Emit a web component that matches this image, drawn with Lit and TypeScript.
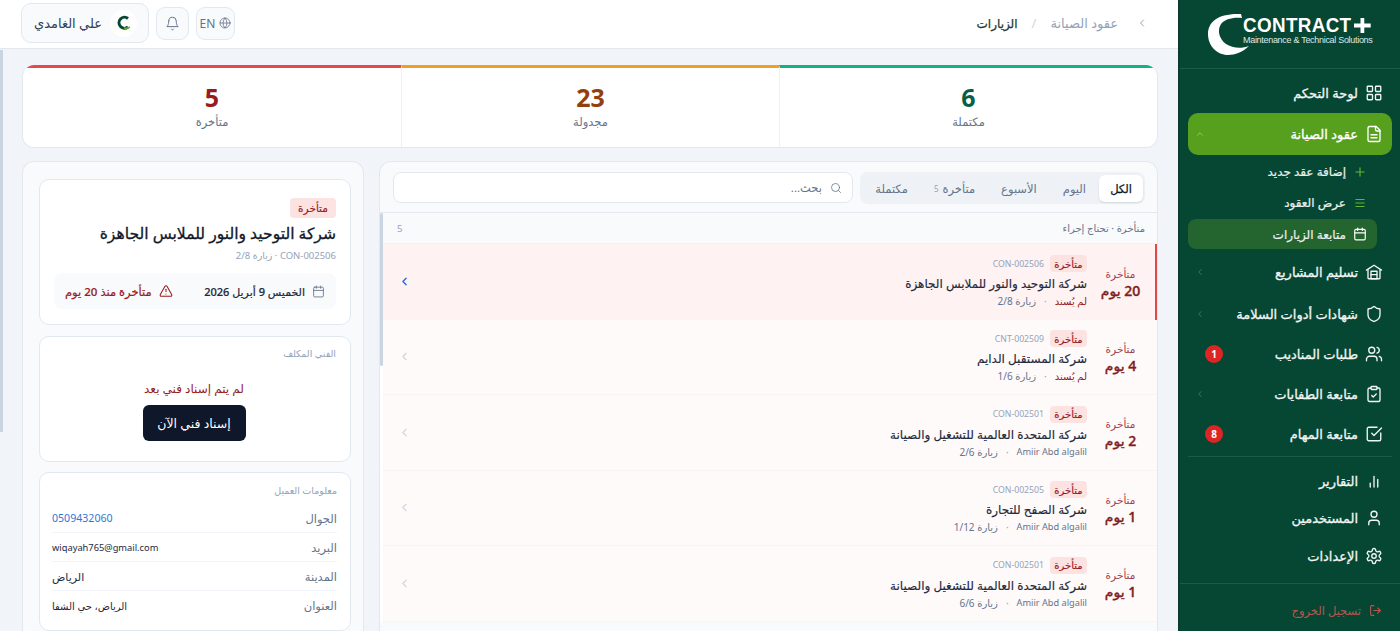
import {LitElement, css, html, svg} from 'lit';
import {customElement} from 'lit/decorators.js';

const ICONS: Record<string, unknown> = {
  grid: svg`<rect x="3" y="3" width="7" height="7" rx="1"/><rect x="14" y="3" width="7" height="7" rx="1"/><rect x="14" y="14" width="7" height="7" rx="1"/><rect x="3" y="14" width="7" height="7" rx="1"/>`,
  file: svg`<path d="M15 2H6a2 2 0 0 0-2 2v16a2 2 0 0 0 2 2h12a2 2 0 0 0 2-2V7Z"/><path d="M14 2v4a2 2 0 0 0 2 2h4"/><path d="M16 13H8"/><path d="M16 17H8"/>`,
  plus: svg`<path d="M5 12h14"/><path d="M12 5v14"/>`,
  lines: svg`<path d="M5 6h14"/><path d="M5 12h14"/><path d="M5 18h14"/>`,
  calendar: svg`<path d="M8 2v4"/><path d="M16 2v4"/><rect x="3" y="4" width="18" height="18" rx="2"/><path d="M3 10h18"/>`,
  warehouse: svg`<path d="M2 9.500 12 3l10 6.500"/><path d="M4 9v11a1 1 0 0 0 1 1h14a1 1 0 0 0 1-1V9"/><rect x="8" y="11" width="8" height="10"/><path d="M8 15.500h8"/>`,
  shield: svg`<path d="M20 13c0 5-3.5 7.5-7.66 8.95a1 1 0 0 1-.67-.01C7.5 20.5 4 18 4 13V6a1 1 0 0 1 1-1c2 0 4.5-1.2 6.24-2.72a1.17 1.17 0 0 1 1.52 0C14.51 3.81 17 5 19 5a1 1 0 0 1 1 1z"/>`,
  users: svg`<path d="M16 21v-2a4 4 0 0 0-4-4H6a4 4 0 0 0-4 4v2"/><circle cx="9" cy="7" r="4"/><path d="M22 21v-2a4 4 0 0 0-3-3.87"/><path d="M16 3.13a4 4 0 0 1 0 7.75"/>`,
  clipboard: svg`<rect x="8" y="2" width="8" height="4" rx="1"/><path d="M16 4h2a2 2 0 0 1 2 2v14a2 2 0 0 1-2 2H6a2 2 0 0 1-2-2V6a2 2 0 0 1 2-2h2"/><path d="m9 14 2 2 4-4"/>`,
  check: svg`<path d="M21 10.5V19a2 2 0 0 1-2 2H5a2 2 0 0 1-2-2V5a2 2 0 0 1 2-2h11"/><path d="m9 11 3 3L22 4"/>`,
  chart: svg`<path d="M7 20v-5"/><path d="M12 20V6"/><path d="M17 20V10"/>`,
  user: svg`<path d="M19 21v-2a4 4 0 0 0-4-4H9a4 4 0 0 0-4 4v2"/><circle cx="12" cy="7" r="4"/>`,
  gear: svg`<path d="M12.22 2h-.44a2 2 0 0 0-2 2v.18a2 2 0 0 1-1 1.73l-.43.25a2 2 0 0 1-2 0l-.15-.08a2 2 0 0 0-2.73.73l-.22.38a2 2 0 0 0 .73 2.73l.15.1a2 2 0 0 1 1 1.72v.51a2 2 0 0 1-1 1.74l-.15.09a2 2 0 0 0-.73 2.73l.22.38a2 2 0 0 0 2.73.73l.15-.08a2 2 0 0 1 2 0l.43.25a2 2 0 0 1 1 1.73V20a2 2 0 0 0 2 2h.44a2 2 0 0 0 2-2v-.18a2 2 0 0 1 1-1.73l.43-.25a2 2 0 0 1 2 0l.15.08a2 2 0 0 0 2.73-.73l.22-.39a2 2 0 0 0-.73-2.73l-.15-.08a2 2 0 0 1-1-1.74v-.5a2 2 0 0 1 1-1.74l.15-.09a2 2 0 0 0 .73-2.73l-.22-.38a2 2 0 0 0-2.73-.73l-.15.08a2 2 0 0 1-2 0l-.43-.25a2 2 0 0 1-1-1.73V4a2 2 0 0 0-2-2z"/><circle cx="12" cy="12" r="3"/>`,
  logout: svg`<path d="M9 21H5a2 2 0 0 1-2-2V5a2 2 0 0 1 2-2h4"/><path d="m16 17 5-5-5-5"/><path d="M21 12H9"/>`,
  bell: svg`<path d="M6 8a6 6 0 0 1 12 0c0 7 3 9 3 9H3s3-2 3-9"/><path d="M10.3 21a1.94 1.94 0 0 0 3.4 0"/>`,
  globe: svg`<circle cx="12" cy="12" r="10"/><path d="M12 2a14.5 14.5 0 0 0 0 20 14.5 14.5 0 0 0 0-20"/><path d="M2 12h20"/>`,
  search: svg`<circle cx="11" cy="11" r="8"/><path d="m21 21-4.3-4.3"/>`,
  alert: svg`<path d="m21.73 18-8-14a2 2 0 0 0-3.48 0l-8 14A2 2 0 0 0 4 21h16a2 2 0 0 0 1.73-3"/><path d="M12 9v4"/><path d="M12 17h.01"/>`,
  left: svg`<path d="m15 18-6-6 6-6"/>`,
  up: svg`<path d="m18 15-6-6-6 6"/>`,
};

const icon = (name: string, size: number, sw = 2) => html`<svg
  class="ic" width=${size} height=${size} viewBox="0 0 24 24" fill="none"
  stroke="currentColor" stroke-width=${sw} stroke-linecap="round" stroke-linejoin="round">${ICONS[name]}</svg>`;

const NAV_TOP = [
  {label: 'تسليم المشاريع', ic: 'warehouse', chev: true, h: 42},
  {label: 'شهادات أدوات السلامة', ic: 'shield', chev: true, h: 41},
  {label: 'طلبات المناديب', ic: 'users', badge: '1', h: 40},
  {label: 'متابعة الطفايات', ic: 'clipboard', chev: true, h: 40},
  {label: 'متابعة المهام', ic: 'check', badge: '8', h: 40},
];

const NAV_BOTTOM = [
  {label: 'التقارير', ic: 'chart'},
  {label: 'المستخدمين', ic: 'user'},
  {label: 'الإعدادات', ic: 'gear'},
];

const ROWS = [
  {days: '20 يوم', code: 'CON-002506', name: 'شركة التوحيد والنور للملابس الجاهزة', who: 'لم يُسند', visit: 'زيارة 2/8', open: true},
  {days: '4 يوم', code: 'CNT-002509', name: 'شركة المستقبل الدايم', who: 'لم يُسند', visit: 'زيارة 1/6'},
  {days: '2 يوم', code: 'CON-002501', name: 'شركة المتحدة العالمية للتشغيل والصيانة', who: 'Amiir Abd algalil', visit: 'زيارة 2/6'},
  {days: '1 يوم', code: 'CON-002505', name: 'شركة الصفح للتجارة', who: 'Amiir Abd algalil', visit: 'زيارة 1/12'},
  {days: '1 يوم', code: 'CON-002501', name: 'شركة المتحدة العالمية للتشغيل والصيانة', who: 'Amiir Abd algalil', visit: 'زيارة 6/6'},
];

const INFO = [
  {k: 'الجوال', v: '0509432060', cls: 'phone'},
  {k: 'البريد', v: 'wiqayah765@gmail.com', cls: 'mail'},
  {k: 'المدينة', v: 'الرياض', cls: ''},
  {k: 'العنوان', v: 'الرياض، حي الشفا', cls: 'small'},
];

@customElement('app-root')
export class AppRoot extends LitElement {
  static override styles = css`
    :host {
      display: flex;
      width: 1400px;
      height: 631px;
      overflow: hidden;
      position: relative;
      background: #f1f5f9;
      color: #0f172a;
      font-family: "Noto Sans", "DejaVu Sans", sans-serif;
      direction: rtl;
    }
    * { box-sizing: border-box; }
    .ic { flex: none; display: block; }

    /* sidebar */
    .side {
      width: 222px;
      flex: none;
      height: 631px;
      background: #064734;
      border-left: 2px solid #0d3b2e;
      color: #fff;
      display: flex;
      flex-direction: column;
    }
    .logo {
      height: 69px;
      flex: none;
      border-bottom: 1px solid rgba(255,255,255,.1);
      padding: 13px 0 0 28px;
      direction: ltr;
      display: flex;
      justify-content: flex-start;
      position: relative;
    }
    .logo-text { position: absolute; left: 63px; top: 14px; font-family: "Liberation Sans", sans-serif; }
    .logo-main {
      display: flex;
      align-items: center;
      gap: 3px;
      font-size: 20px;
      font-weight: 700;
      line-height: 22px;
      height: 22px;
      letter-spacing: .4px;
      white-space: nowrap;
      transform: scaleX(.94);
      transform-origin: left center;
    }
    .logo-sub { font-size: 9px; line-height: 9px; letter-spacing: -.3px; color: #dfe9e5; white-space: nowrap; }
    .nav { padding: 3px 8px 0 8px; }
    .item {
      display: flex;
      align-items: center;
      gap: 7px;
      height: 41px;
      padding: 0 9px 0 0;
      font-size: 13px;
      font-weight: 500;
      -webkit-text-stroke: .3px currentColor;
      color: #f1f5f3;
      position: relative;
    }
    .item.active {
      height: 42px;
      background: #56a01e;
      border-radius: 10px;
      color: #fff;
    }
    .item .chev { position: absolute; left: 7px; top: 50%; transform: translateY(-50%); color: rgba(255,255,255,.28); }
    .item.active .chev { color: rgba(255,255,255,.45); }
    .badge {
      position: absolute;
      left: 17px;
      top: 50%;
      transform: translateY(-50%);
      width: 18px;
      height: 18px;
      border-radius: 50%;
      background: #dc2626;
      color: #fff;
      font-size: 10px;
      font-weight: 700;
      -webkit-text-stroke: 0;
      display: flex;
      align-items: center;
      justify-content: center;
    }
    .subs { padding: 1px 15px 2px 0; }
    .sub {
      display: flex;
      align-items: center;
      gap: 7px;
      height: 31px;
      padding-right: 10px;
      font-size: 12px;
      font-weight: 500;
      -webkit-text-stroke: .2px currentColor;
      color: #eaf1ee;
    }
    .sub .ic { color: #65b32e; }
    .sub.on { height: 30px; background: #24642f; border-radius: 8px; margin-top: 1px; }
    .sub.on .ic { color: #fff; }
    .rule { height: 1px; background: rgba(255,255,255,.1); margin: 2px 0 5px; }
    .item.low { height: 37.5px; }
    .foot {
      margin-top: 8px;
      border-top: 1px solid rgba(255,255,255,.1);
      padding: 7px 18px 0 0;
      height: 48px;
      display: flex;
      align-items: center;
      gap: 8px;
      font-size: 11.5px;
      font-weight: 500;
      color: #b5574d;
    }

    /* main column */
    .main { flex: 1; min-width: 0; display: flex; flex-direction: column; height: 631px; }
    .top {
      height: 49px;
      flex: none;
      background: #fff;
      border-bottom: 1px solid #e2e8f0;
      display: flex;
      align-items: center;
      justify-content: space-between;
      padding: 0 30px 2px 21px;
    }
    .crumbs { display: flex; align-items: center; font-size: 13px; color: #94a3b8; }
    .crumbs .ic { margin-left: 18px; }
    .crumbs .sep { margin: 0 14px; color: #cbd5e1; }
    .crumbs .now { font-size: 12px; color: #1e3a34; font-weight: 500; -webkit-text-stroke: .25px currentColor; }
    .tools { display: flex; align-items: center; gap: 7px; }
    .tool {
      height: 33px;
      border: 1px solid #e2e8f0;
      border-radius: 9px;
      background: #f8fafc;
      color: #64748b;
      display: flex;
      align-items: center;
      justify-content: center;
      gap: 4px;
      font-size: 12px;
    }
    .tool.bell { width: 33px; }
    .tool.lang { width: 39px; }
    .who {
      width: 128px;
      height: 40px;
      border: 1px solid #e2e8f0;
      border-radius: 10px;
      background: #f8fafc;
      display: flex;
      align-items: center;
      gap: 8px;
      padding-right: 11px;
      font-size: 13px;
      color: #334155;
    }
    .avatar {
      width: 27px;
      height: 27px;
      border-radius: 50%;
      background: #fff;
      flex: none;
      display: flex;
      align-items: center;
      justify-content: center;
    }

    .body { flex: 1; min-height: 0; padding: 16px 20px 0 22px; display: flex; flex-direction: column; gap: 13px; overflow: hidden; }
    .stats {
      flex: none;
      height: 83px;
      display: grid;
      grid-template-columns: repeat(3, 1fr);
      background: #fff;
      border: 1px solid #e2e8f0;
      border-top: 0;
      border-radius: 12px;
      overflow: hidden;
    }
    .stat {
      border-top: 3px solid;
      text-align: center;
      padding-top: 15px;
      border-left: 1px solid #eef2f6;
    }
    .stat:last-child { border-left: 0; }
    .stat b { display: block; font-size: 25px; line-height: 28px; font-weight: 700; }
    .stat span { display: block; font-size: 11.5px; line-height: 17px; margin-top: 2px; color: #64748b; }

    .cols { flex: 1; min-height: 0; display: flex; gap: 15px; }
    .list {
      flex: 1;
      min-width: 0;
      background: #f8fafc;
      border: 1px solid #e2e8f0;
      border-bottom: 0;
      border-radius: 12px 12px 0 0;
      overflow: hidden;
    }
    .bar {
      height: 51px;
      display: flex;
      align-items: flex-start;
      gap: 7px;
      padding: 10px 12px 0 13px;
      border-bottom: 1px solid #e2e8f0;
    }
    .tabs {
      width: 285px;
      height: 32px;
      flex: none;
      background: #eef2f6;
      border-radius: 8px;
      display: flex;
      align-items: center;
      padding: 0 2px;
      font-size: 11.5px;
      color: #64748b;
    }
    .tab { height: 27px; display: flex; align-items: center; justify-content: center; gap: 4px; padding: 0 13px; white-space: nowrap; }
    .tab.on { width: 44px; padding: 0; background: #fff; border-radius: 6px; color: #0f172a; font-weight: 500; -webkit-text-stroke: .25px currentColor; box-shadow: 0 1px 2px rgba(15,23,42,.12); }
    .tab small { font-size: 8px; color: #94a3b8; }
    .search {
      flex: 1;
      height: 31px;
      background: #fff;
      border: 1px solid #e2e8f0;
      border-radius: 8px;
      display: flex;
      align-items: center;
      gap: 8px;
      padding-right: 10px;
      font-size: 11.5px;
      color: #64748b;
    }
    .search .ic { color: #64748b; }
    .group {
      height: 31px;
      display: flex;
      align-items: center;
      justify-content: space-between;
      padding: 0 12px 0 17px;
      border-bottom: 1px solid #eef2f6;
      font-size: 10px;
      color: #64748b;
    }
    .group span:last-child { color: #94a3b8; font-size: 9.5px; }
    .rows { padding-left: 3px; background: #fff; }
    .row {
      height: 75.5px;
      display: flex;
      align-items: center;
      background: #fffafa;
      border-bottom: 1px solid #fbf3f3;
      padding: 0 0 0 15px;
      color: #cbd5e1;
    }
    .row.open { background: #fef2f2; border-right: 2px solid #dc4a4a; color: #2563eb; border-bottom: 0; }
    .row.open .late { width: 68px; padding-right: 1px; }
    .late { width: 70px; flex: none; padding-right: 3px; padding-top: 2px; text-align: center; }
    .late i { display: block; font-style: normal; font-size: 10.5px; line-height: 16px; color: #a1414a; }
    .late b { display: block; font-size: 14px; line-height: 18px; font-weight: 500; -webkit-text-stroke: .4px currentColor; color: #7f1d1d; }
    .mid { flex: 1; min-width: 0; }
    .l1 { display: flex; align-items: center; gap: 6px; height: 17px; }
    .pill {
      background: #fde2e2;
      color: #991b1b;
      border-radius: 4px;
      font-size: 10px;
      font-weight: 500;
      -webkit-text-stroke: .15px currentColor;
      width: 37px;
      height: 17px;
      display: flex;
      align-items: center;
      justify-content: center;
    }
    .code { font-size: 8.7px; color: #94a3b8; }
    .name { font-size: 12px; font-weight: 500; -webkit-text-stroke: .15px currentColor; line-height: 20px; margin-top: 2px; color: #1e293b; }
    .meta { display: flex; align-items: center; gap: 8px; font-size: 10px; line-height: 14px; color: #64748b; }
    .meta .red { color: #991b1b; }
    .meta .dot { color: #94a3b8; }
    .meta .tech { font-size: 9.2px; }

    .detail {
      width: 342px;
      flex: none;
      background: #f8fafc;
      border: 1px solid #e2e8f0;
      border-bottom: 0;
      border-radius: 12px 12px 0 0;
      padding: 17px 12px 0 16px;
      display: flex;
      flex-direction: column;
      gap: 11px;
    }
    .card { background: #fff; border: 1px solid #e2e8f0; border-radius: 10px; flex: none; }
    .c1 { height: 146px; padding: 18px 14px 0 14px; }
    .c1 .pill { width: 46px; height: 20px; font-size: 10.5px; }
    .c1 h2 { margin: 4px 0 0; font-size: 15.6px; line-height: 22px; font-weight: 500; -webkit-text-stroke: .3px currentColor; color: #0f172a; }
    .c1 p { margin: 3px 0 0; font-size: 9.5px; line-height: 17px; color: #94a3b8; }
    .when {
      margin-top: 9px;
      height: 36px;
      background: #f8fafc;
      border-radius: 8px;
      display: flex;
      align-items: center;
      justify-content: space-between;
      padding: 0 11px;
      font-size: 11px;
      font-weight: 500;
      -webkit-text-stroke: .2px currentColor;
      color: #1e293b;
    }
    .when div { display: flex; align-items: center; gap: 7px; }
    .when .ic { color: #64748b; }
    .when .warn { font-size: 11.5px; }
    .when .warn, .when .warn .ic { color: #991b1b; }
    .c2 { height: 126px; padding: 9px 14px 0 12px; }
    .cap { font-size: 9.5px; line-height: 15px; color: #94a3b8; }
    .c2 .none { text-align: center; margin-top: 19px; font-size: 12px; line-height: 17px; color: #991b1b; }
    .btn {
      width: 103px;
      height: 36px;
      margin: 8px auto 0;
      background: #0f172a;
      color: #fff;
      border-radius: 6px;
      display: flex;
      align-items: center;
      justify-content: center;
      font-size: 12.5px;
      font-weight: 500;
    }
    .c3 { height: 159px; margin-top: -1px; padding: 10px 13px 0 12px; }
    .c3 .cap { margin-bottom: 6px; }
    .info {
      height: 29px;
      display: flex;
      align-items: center;
      justify-content: space-between;
      border-bottom: 1px solid #f1f5f9;
      font-size: 11.5px;
      color: #64748b;
    }
    .info:last-child { border-bottom: 0; }
    .info span:last-child { font-size: 11px; color: #1e293b; }
    .info .phone { color: #2f78d6 !important; font-size: 10.6px !important; }
    .info .mail { font-size: 9.3px !important; }
    .info .small { font-size: 10px !important; }

    .track { position: absolute; background: #cbd5e1; border-radius: 2px; width: 3px; }
    .track.page { left: 0; top: 50px; height: 382px; border-radius: 0; }
    .track.inner { left: 380px; top: 213px; height: 153px; }
  `;

  private renderRow(r: (typeof ROWS)[number]) {
    const unassigned = r.who === 'لم يُسند';
    return html`<div class="row ${r.open ? 'open' : ''}">
      <div class="late"><i>متأخرة</i><b>${r.days}</b></div>
      <div class="mid">
        <div class="l1"><span class="pill">متأخرة</span><span class="code">${r.code}</span></div>
        <div class="name">${r.name}</div>
        <div class="meta">
          <span class=${unassigned ? 'red' : 'tech'}>${r.who}</span>
          <span class="dot">·</span>
          <span>${r.visit}</span>
        </div>
      </div>
      ${icon('left', 13, r.open ? 2.4 : 2)}
    </div>`;
  }

  private renderSide() {
    return html`<aside class="side">
      <div class="logo">
        <svg width="43" height="43" viewBox="0 0 43 43" fill="#fff">
          <path d="M33 1C10 0 0 9 0 21c0 12 9 21 20 21 7 0 15-3 21-9-8 3-17 2-23-2-7-5-9-14-5-20 4-5 12-7 21-6Z"/>
        </svg>
        <div class="logo-text">
          <div class="logo-main">
            <span>CONTRACT</span>
            <svg width="18" height="15" viewBox="0 0 18 15" fill="#fff"><rect y="5.500" width="18" height="4"/><rect x="7" width="4" height="15"/></svg>
          </div>
          <div class="logo-sub">Maintenance &amp; Technical Solutions</div>
        </div>
      </div>
      <nav class="nav">
        <div class="item">${icon('grid', 18, 1.8)}لوحة التحكم</div>
        <div class="item active">${icon('file', 18, 1.8)}عقود الصيانة<span class="chev">${icon('up', 10)}</span></div>
        <div class="subs">
          <div class="sub">${icon('plus', 14)}إضافة عقد جديد</div>
          <div class="sub">${icon('lines', 14)}عرض العقود</div>
          <div class="sub on">${icon('calendar', 14)}متابعة الزيارات</div>
        </div>
        ${NAV_TOP.map(n => html`<div class="item" style="height:${n.h}px">
          ${icon(n.ic, 18, 1.8)}${n.label}
          ${n.chev ? html`<span class="chev">${icon('left', 10)}</span>` : ''}
          ${n.badge ? html`<span class="badge">${n.badge}</span>` : ''}
        </div>`)}
        <div class="rule"></div>
        ${NAV_BOTTOM.map(n => html`<div class="item low">${icon(n.ic, 18, 1.8)}${n.label}</div>`)}
      </nav>
      <div class="foot">${icon('logout', 13)}تسجيل الخروج</div>
    </aside>`;
  }

  private renderTop() {
    return html`<header class="top">
      <div class="crumbs">
        ${icon('left', 12)}
        <span>عقود الصيانة</span>
        <span class="sep">/</span>
        <span class="now">الزيارات</span>
      </div>
      <div class="tools">
        <div class="tool lang">${icon('globe', 12, 1.6)}EN</div>
        <div class="tool bell">${icon('bell', 15, 1.6)}</div>
        <div class="who">
          <span class="avatar">
            <svg width="16" height="16" viewBox="0 0 16 16" fill="none">
              <path d="M12 3.5A5.5 5.5 0 1 0 12 12" stroke="#064734" stroke-width="3"/>
              <path d="M8 13c2 .6 4 .2 6-1.200" stroke="#65b32e" stroke-width="1.500"/>
            </svg>
          </span>
          علي الغامدي
        </div>
      </div>
    </header>`;
  }

  private renderDetail() {
    return html`<section class="detail">
      <div class="card c1">
        <span class="pill">متأخرة</span>
        <h2>شركة التوحيد والنور للملابس الجاهزة</h2>
        <p>CON-002506 · زيارة 2/8</p>
        <div class="when">
          <div>${icon('calendar', 13, 1.6)}الخميس 9 أبريل 2026</div>
          <div class="warn">${icon('alert', 14, 1.8)}متأخرة منذ 20 يوم</div>
        </div>
      </div>
      <div class="card c2">
        <div class="cap">الفني المكلف</div>
        <div class="none">لم يتم إسناد فني بعد</div>
        <div class="btn">إسناد فني الآن</div>
      </div>
      <div class="card c3">
        <div class="cap">معلومات العميل</div>
        ${INFO.map(i => html`<div class="info"><span>${i.k}</span><span class=${i.cls}>${i.v}</span></div>`)}
      </div>
    </section>`;
  }

  override render() {
    return html`
      ${this.renderSide()}
      <div class="main">
        ${this.renderTop()}
        <div class="body">
          <div class="stats">
            <div class="stat" style="border-top-color:#10b483"><b style="color:#065f46">6</b><span>مكتملة</span></div>
            <div class="stat" style="border-top-color:#f0a020"><b style="color:#92400e">23</b><span>مجدولة</span></div>
            <div class="stat" style="border-top-color:#e8484a"><b style="color:#991b1b">5</b><span>متأخرة</span></div>
          </div>
          <div class="cols">
            <section class="list">
              <div class="bar">
                <div class="tabs">
                  <span class="tab on">الكل</span>
                  <span class="tab">اليوم</span>
                  <span class="tab">الأسبوع</span>
                  <span class="tab">متأخرة <small>5</small></span>
                  <span class="tab">مكتملة</span>
                </div>
                <div class="search">${icon('search', 12, 1.6)}بحث...</div>
              </div>
              <div class="group"><span>متأخرة · تحتاج إجراء</span><span>5</span></div>
              <div class="rows">${ROWS.map(r => this.renderRow(r))}</div>
            </section>
            ${this.renderDetail()}
          </div>
        </div>
      </div>
      <div class="track page"></div>
      <div class="track inner"></div>
    `;
  }
}

declare global {
  interface HTMLElementTagNameMap {
    'app-root': AppRoot;
  }
}
